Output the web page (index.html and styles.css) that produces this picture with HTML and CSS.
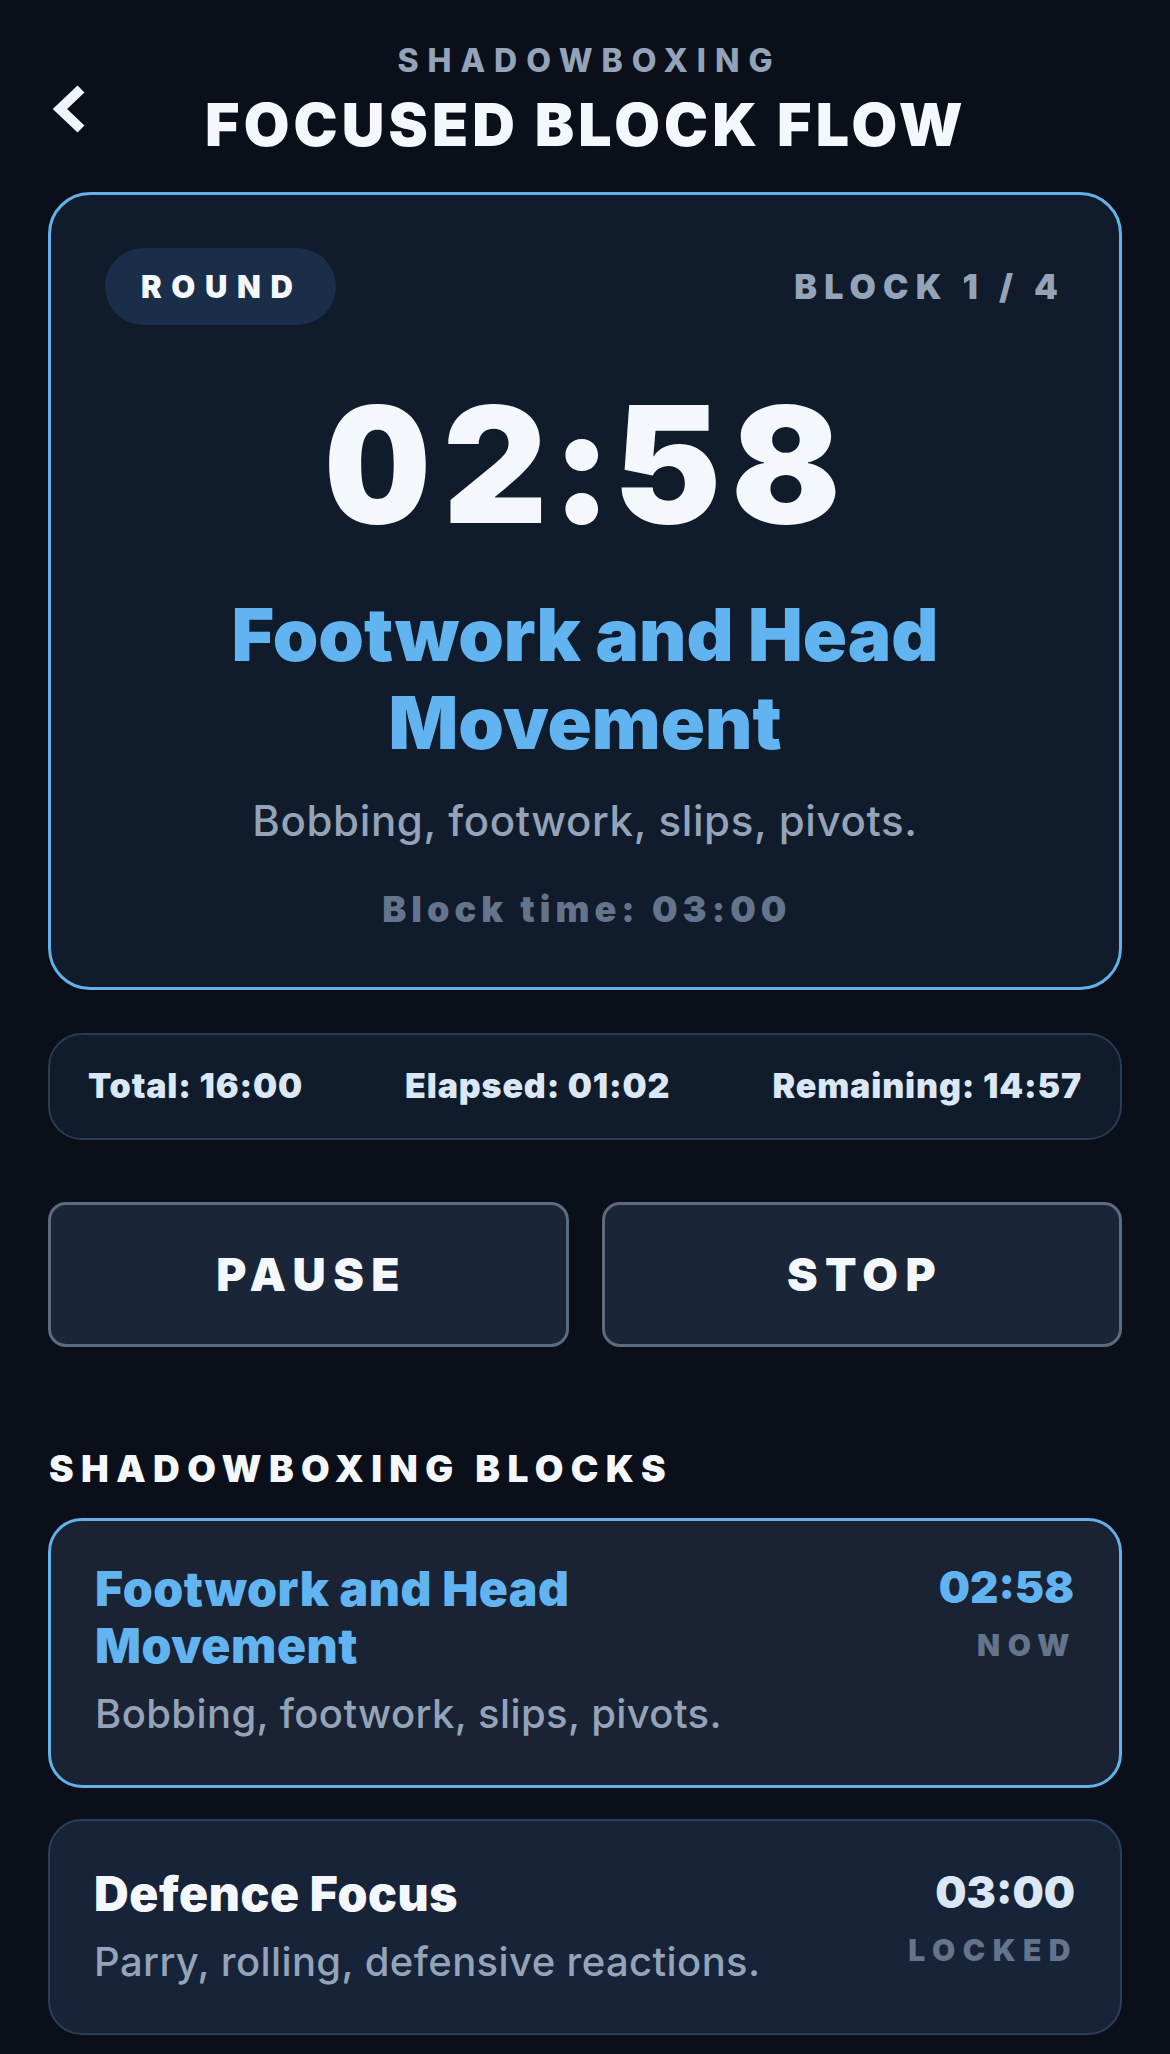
FILE: index.html
```html
<!DOCTYPE html>
<html lang="en">
<head>
    <meta charset="UTF-8">
    <meta name="viewport" content="width=device-width, initial-scale=1.0">
    <title>Focused Block Flow</title>
    <link rel="stylesheet" href="styles.css">
</head>
<body>

<div class="page">
    <div class="header">
        <button class="back" aria-label="Back">
            <svg width="40" height="48" viewBox="0 0 40 48">
                <polyline points="32,4 11,24 32,44" fill="none" stroke="#f1f5f9" stroke-width="10" stroke-linejoin="miter" stroke-linecap="butt"/>
            </svg>
        </button>
        <div class="eyebrow">SHADOWBOXING</div>
        <h1 class="title">FOCUSED BLOCK FLOW</h1>
    </div>

    <div class="timer-card">
        <div class="timer-top">
            <span class="pill">ROUND</span>
            <span class="block-count">BLOCK 1 / 4</span>
        </div>
        <div class="clock">02:58</div>
        <div class="current-name">Footwork and Head Movement</div>
        <div class="current-desc">Bobbing, footwork, slips, pivots.</div>
        <div class="block-time">Block time: 03:00</div>
    </div>

    <div class="stats">
        <span>Total: 16:00</span>
        <span>Elapsed: 01:02</span>
        <span>Remaining: 14:57</span>
    </div>

    <div class="actions">
        <button class="action">PAUSE</button>
        <button class="action">STOP</button>
    </div>

    <h2 class="section-title">SHADOWBOXING BLOCKS</h2>

    <div class="block-list">
        <div class="block active">
            <div class="block-info">
                <div class="block-name">Footwork and Head Movement</div>
                <div class="block-desc">Bobbing, footwork, slips, pivots.</div>
            </div>
            <div class="block-side">
                <div class="block-dur">02:58</div>
                <div class="block-state">NOW</div>
            </div>
        </div>
        <div class="block">
            <div class="block-info">
                <div class="block-name">Defence Focus</div>
                <div class="block-desc">Parry, rolling, defensive reactions.</div>
            </div>
            <div class="block-side">
                <div class="block-dur">03:00</div>
                <div class="block-state">LOCKED</div>
            </div>
        </div>
    </div>
</div>

</body>
</html>
```

FILE: styles.css
```css
body {
    margin: 0;
    background: #0a0f19;
    font-family: Inter, "Noto Sans", sans-serif;
    color: #f1f5f9;
}

.page {
    padding: 42px 48px 20px;
}

/* header */
.header {
    position: relative;
    text-align: center;
}

.back {
    position: absolute;
    left: 1px;
    top: 43px;
    padding: 0;
    border: none;
    background: none;
    cursor: pointer;
}

.eyebrow {
    font-size: 32px;
    line-height: 1.2;
    font-weight: 800;
    letter-spacing: 0.28em;
    text-indent: 0.28em;
    color: #94a3b8;
}

.title {
    margin: 10px 0 0;
    font-size: 59px;
    line-height: 1.2;
    font-weight: 900;
    letter-spacing: 0.07em;
    text-indent: 0.03em;
    color: #f4f8fc;
}

/* main timer card */
.timer-card {
    margin-top: 31px;
    padding: 53px 54px 56px;
    border: 3px solid #64b0e8;
    border-radius: 42px;
    background: #101b2b;
    text-align: center;
}

.timer-top {
    display: flex;
    justify-content: space-between;
    align-items: center;
}

.pill {
    height: 77px;
    display: flex;
    align-items: center;
    padding: 0 34px 0 36px;
    border-radius: 39px;
    background: #1a2e4a;
    font-size: 31px;
    font-weight: 900;
    letter-spacing: 0.31em;
    color: #f4f8fc;
}

.block-count {
    font-size: 34px;
    font-weight: 900;
    letter-spacing: 0.21em;
    color: #94a3b8;
}

.clock {
    margin-top: 58px;
    font-size: 162px;
    line-height: 1;
    font-weight: 900;
    letter-spacing: 0.08em;
    text-indent: 0.04em;
    color: #f4f8fc;
    font-variant-numeric: tabular-nums;
}

.current-name {
    margin: 46px auto 0;
    max-width: 800px;
    font-size: 73px;
    line-height: 88px;
    font-weight: 900;
    color: #62b4f0;
}

.current-desc {
    margin-top: 29px;
    font-size: 42px;
    line-height: 1.2;
    font-weight: 500;
    letter-spacing: 0.015em;
    color: #94a3b8;
}

.block-time {
    margin-top: 41px;
    font-size: 36px;
    line-height: 1.2;
    font-weight: 900;
    letter-spacing: 0.14em;
    text-indent: 0.1em;
    color: #64748b;
}

/* totals */
.stats {
    margin-top: 43px;
    display: flex;
    justify-content: space-between;
    padding: 31px 38px;
    border: 2px solid #2a3b52;
    border-radius: 34px;
    background: #101b2b;
    font-size: 34px;
    line-height: 1.2;
    font-weight: 900;
    letter-spacing: 0.025em;
    color: #dbe7f5;
}

/* buttons */
.actions {
    margin-top: 62px;
    display: grid;
    grid-template-columns: 1fr 1fr;
    gap: 33px;
}

.action {
    height: 145px;
    border: 3px solid #5c6b80;
    border-radius: 18px;
    background: #1a2537;
    font-family: inherit;
    font-size: 46px;
    font-weight: 900;
    letter-spacing: 0.16em;
    text-indent: 0.14em;
    color: #f4f8fc;
    cursor: pointer;
}

/* block list */
.section-title {
    margin: 100px 0 0 1px;
    font-size: 37px;
    line-height: 1.2;
    font-weight: 900;
    letter-spacing: 0.2em;
    color: #f4f8fc;
}

.block-list {
    margin-top: 27px;
    display: flex;
    flex-direction: column;
    gap: 31px;
}

.block {
    display: flex;
    justify-content: space-between;
    align-items: flex-start;
    gap: 30px;
    padding: 44px 45px 47px 44px;
    border: 2px solid #2c3f5a;
    border-radius: 34px;
    background: #172338;
}

.block.active {
    border: 3px solid #64b0e8;
    background: #192334;
    padding-top: 39px;
}

.block-name {
    max-width: 580px;
    font-size: 48px;
    line-height: 57px;
    font-weight: 900;
    letter-spacing: 0.012em;
    color: #f4f8fc;
}

.active .block-name {
    color: #62b4f0;
}

.block-desc {
    margin-top: 16px;
    font-size: 40px;
    line-height: 1.2;
    font-weight: 500;
    letter-spacing: 0.01em;
    color: #94a3b8;
}

.block-side {
    text-align: right;
    padding-top: 1px;
}

.block-dur {
    font-size: 44px;
    line-height: 1.2;
    font-weight: 900;
    color: #dbe7f5;
}

.active .block-dur {
    color: #62b4f0;
}

.block-state {
    margin-top: 13px;
    margin-right: -0.1em;
    font-size: 30px;
    line-height: 1.2;
    font-weight: 900;
    letter-spacing: 0.25em;
    color: #64748b;
}
```
